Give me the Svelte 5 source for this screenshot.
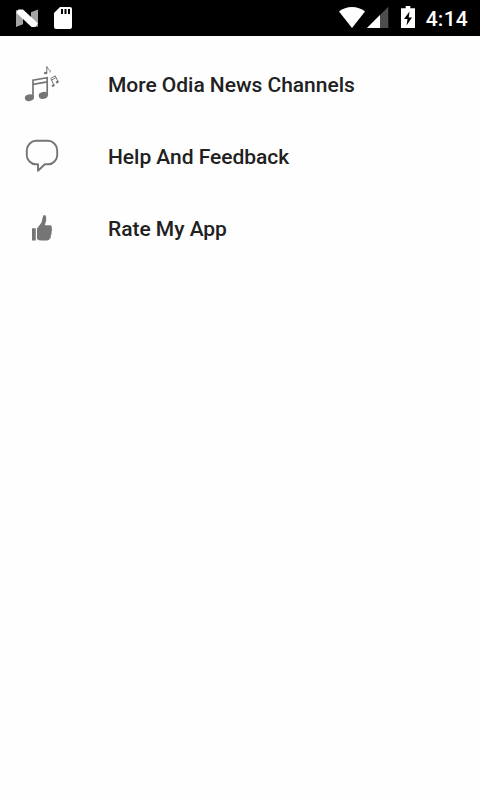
<script lang="ts">
	interface MenuItem {
		icon: 'music' | 'chat' | 'thumb';
		label: string;
	}

	const time = '4:14';

	const items: MenuItem[] = [
		{ icon: 'music', label: 'More Odia News Channels' },
		{ icon: 'chat', label: 'Help And Feedback' },
		{ icon: 'thumb', label: 'Rate My App' }
	];
</script>

<div class="screen">
	<header class="status-bar">
		<div class="status-group notifications">
			<svg width="22" height="36" viewBox="0 0 22 36" aria-hidden="true">
				<path d="M0 10 7 12V24.300L0 27ZM15 12.300 22 9.500V27L15 24Z" fill="#a3a3a3" />
				<path d="M2.300 9.500H7L21.800 23.300 19.500 27H15.500L.3 12.700Z" fill="#fff" />
			</svg>
			<svg width="18" height="36" viewBox="0 0 18 36" aria-hidden="true">
				<path
					d="M6 7H16A2 2 0 0 1 18 9V27A2 2 0 0 1 16 29H2A2 2 0 0 1 0 27V13Z"
					fill="#fff"
				/>
				<path d="M8 9V14M11.500 9V14M15 9V14" stroke="#000" stroke-width="2" />
			</svg>
		</div>
		<div class="status-group system">
			<svg width="26" height="36" viewBox="0 0 26 36" aria-hidden="true">
				<path d="M0 11.500Q5.500 7 13 7T26 11.500L13 28Z" fill="#fff" />
			</svg>
			<svg class="signal" width="22" height="36" viewBox="0 0 22 36" aria-hidden="true">
				<path d="M0 28 21.300 6.700V28Z" fill="#4d4d4d" />
				<path d="M0 28 13 15V28Z" fill="#fff" />
			</svg>
			<svg class="battery" width="14" height="36" viewBox="0 0 14 36" aria-hidden="true">
				<path d="M4.700 6H9.300V8.300H14V28H0V8.300H4.700Z" fill="#fff" />
				<path d="M8.500 11.500 3 19H6.500L5.500 25.500 11 17.500H7.700Z" fill="#000" />
			</svg>
			<span class="time">{time}</span>
		</div>
	</header>

	<nav class="menu">
		{#each items as item (item.icon)}
			<button class="menu-item" type="button">
				<svg class="menu-icon" viewBox="0 0 36 36" aria-hidden="true">
					{#if item.icon === 'music'}
						<g fill="currentColor">
							<ellipse cx="5.400" cy="31.800" rx="4.600" ry="3.300" transform="rotate(-12 5.400 31.800)" />
							<ellipse cx="19.300" cy="29.400" rx="4.600" ry="3.500" transform="rotate(-12 19.300 29.400)" />
							<ellipse cx="21.600" cy="7" rx="1.700" ry="1.200" />
							<ellipse cx="29.200" cy="19.500" rx="1.600" ry="1.200" transform="rotate(-30 29.200 19.500)" />
							<ellipse cx="33.300" cy="16" rx="1.600" ry="1.200" transform="rotate(-30 33.300 16)" />
						</g>
						<g fill="none" stroke="currentColor">
							<path d="M9 32V14.200L23.200 11.700V29.500M9 18.300 23.200 15.800" stroke-width="1.700" />
							<path d="M22.800 7V.5Q23 2.500 25 3.500T26 6.500" />
							<path d="M30 19.500 26.800 12.400 31.200 9.800 34 15.500M27.500 14.200 32 11.500" />
						</g>
					{:else if item.icon === 'chat'}
						<path
							d="M14 26.200H11.500Q8 26.200 5.500 23.500 2.800 21 2.800 17.500V12Q2.800 8.500 5.800 5.500 8.500 2.800 12 2.800H24Q27.500 2.800 30.300 5.500 33.200 8.500 33.200 12V17.500Q33.200 21 30.500 23.500 28 26.200 24.500 26.200H20.800L14 32.800Z"
							fill="none"
							stroke="currentColor"
							stroke-width="1.900"
							stroke-linejoin="round"
						/>
					{:else}
						<path
							d="M8 18.300H11.800V30.500H8ZM13 18.500 17.500 12.500 18.800 7Q19.500 4.500 21.200 5.300 23 7 22.200 10.500L20.800 15.300H26.500Q28.400 16 27.700 18.200 28.500 20 27.500 21.800 28 24 26.800 25.500 27.200 28 25.700 28.700 25.500 30.500 23 30.500H17Q15 30.500 13 29Z"
							fill="currentColor"
						/>
					{/if}
				</svg>
				<span class="menu-label">{item.label}</span>
			</button>
		{/each}
	</nav>
</div>

<style>
	:global(body) {
		margin: 0;
		background: #fefefe;
	}

	.screen {
		display: flex;
		flex-direction: column;
		height: 800px;
		background: #fefefe;
		font-family: Roboto, 'Liberation Sans', sans-serif;
	}

	.status-bar {
		display: flex;
		justify-content: space-between;
		height: 36px;
		box-sizing: border-box;
		padding: 0 12px 0 16px;
		background: #000;
	}

	.status-group {
		display: flex;
		align-items: center;
	}

	.notifications {
		gap: 16px;
	}

	.signal {
		margin-left: 2px;
	}

	.battery {
		margin-left: 12px;
	}

	.time {
		margin-left: 11px;
		padding-top: 2px;
		color: #fff;
		font-size: 21px;
		font-weight: 500;
		line-height: 34px;
		letter-spacing: 0.25px;
	}

	.menu {
		display: flex;
		flex-direction: column;
		padding-top: 12px;
	}

	.menu-item {
		display: flex;
		align-items: center;
		gap: 48px;
		height: 72px;
		padding: 0 24px;
		border: none;
		background: transparent;
		font-family: inherit;
		text-align: left;
	}

	.menu-icon {
		flex: none;
		width: 36px;
		height: 36px;
		color: #757575;
	}

	.menu-label {
		padding-top: 2px;
		color: #212121;
		font-size: 21px;
		font-weight: 500;
		line-height: 25px;
		letter-spacing: -0.03px;
	}
</style>
